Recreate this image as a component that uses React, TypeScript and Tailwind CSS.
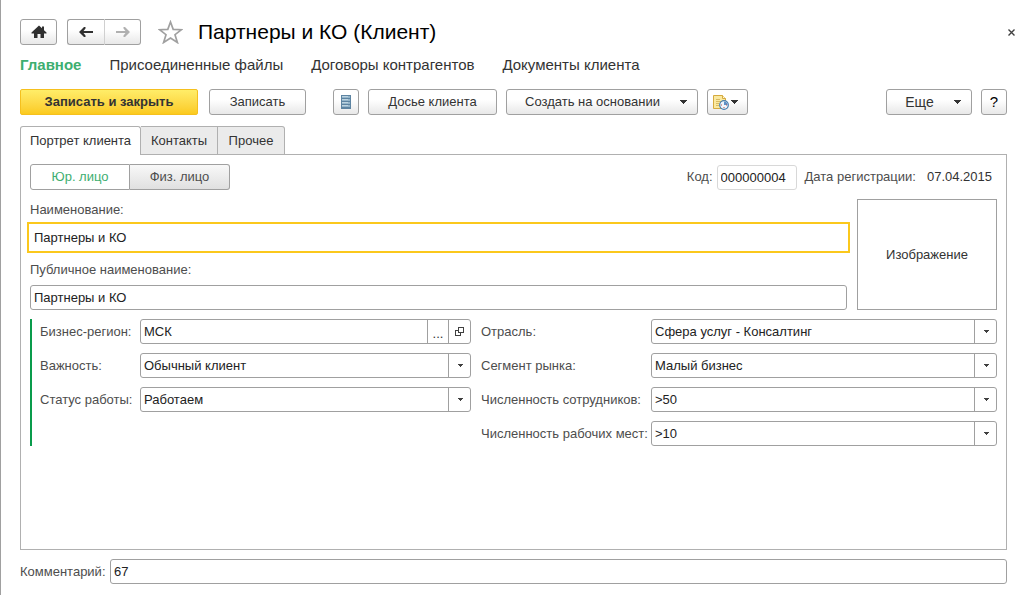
import type { ReactNode } from 'react';
import clsx from 'clsx';

const buttonBase =
  'flex h-[26px] shrink-0 items-center justify-center rounded-[3px] border border-[#a0a0a0] bg-linear-to-b from-white from-40% to-[#e8e8e8] text-[#333333]';

function Caret({ small = false }: { small?: boolean }) {
  return small ? (
    <svg width="5" height="3" viewBox="0 0 5 3" shapeRendering="crispEdges" aria-hidden="true">
      <path d="M0 0h5v1H4v1H3v1H2V2H1V1H0z" fill="#404040" />
    </svg>
  ) : (
    <svg width="7" height="4" viewBox="0 0 7 4" shapeRendering="crispEdges" aria-hidden="true">
      <path d="M0 0h7v1H6v1H5v1H4v1H3V3H2V2H1V1H0z" fill="#333333" />
    </svg>
  );
}

function ArrowIcon({ forward = false }: { forward?: boolean }) {
  return (
    <svg width="14" height="12" viewBox="0 0 14 12" aria-hidden="true">
      {forward ? (
        <path d="M14 6 9 1H7.500v1.500L9.500 5H0v2h9.500l-2 2.500V11H9z" fill="#b0b0b0" />
      ) : (
        <path d="M0 6 5 1h1.500v1.500L4.500 5H14v2H4.500l2 2.500V11H5z" fill="#303030" />
      )}
    </svg>
  );
}

function ListIcon() {
  return (
    <svg width="10" height="14" viewBox="0 0 10 14" shapeRendering="crispEdges" aria-hidden="true">
      <path d="M0 0h10v14H0z" fill="#5d84a2" />
      <path d="M1 1h8v2H1zM1 4h8v2H1zM1 7h8v2H1zM1 10h8v2H1z" fill="#94b5ca" />
      <path d="M1 1h6v1H1zM1 4h6v1H1zM1 7h6v1H1zM1 10h6v1H1z" fill="#bdd3e0" />
    </svg>
  );
}

function ReminderIcon() {
  return (
    <svg width="16" height="16" viewBox="0 0 16 16" aria-hidden="true">
      <path d="M.5 1.500h9l3 3v10H.5z" fill="#fae9a0" stroke="#d5aa3f" />
      <path d="M9.500 1.500v3h3" fill="#fff6ce" stroke="#d5aa3f" />
      <path d="M3 5.500h4M3 7.500h6M3 9.500h3M3 11.500h3" stroke="#d9bb62" />
      <circle cx="11" cy="11" r="4.300" fill="#eef5fb" stroke="#447cae" strokeWidth="1.200" />
      <path d="M11 11V7.500A3.500 3.500 0 0 1 14.500 11z" fill="#5d8fc4" />
      <path d="M8 11h1M11 13v1M13 11h1" stroke="#c05050" />
    </svg>
  );
}

function TextField({ id, value, className }: { id: string; value: string; className?: string }) {
  return (
    <input
      id={id}
      type="text"
      defaultValue={value}
      className={clsx(
        'h-[25px] min-w-0 border bg-white px-[3px] text-[#222222]',
        className ?? 'w-full rounded-[3px] border-[#a0a0a0] outline-none',
      )}
    />
  );
}

function SelectField({ id, value }: { id: string; value: string }) {
  return (
    <div className="relative min-w-0">
      <select
        id={id}
        defaultValue={value}
        className="block h-[25px] w-full appearance-none rounded-[3px] border border-[#a0a0a0] bg-white pr-6 pl-[3px] text-[#222222] outline-none"
      >
        <option>{value}</option>
      </select>
      <span className="pointer-events-none absolute inset-y-0 right-0 flex w-[23px] items-center justify-center border-l border-[#a0a0a0]">
        <Caret small />
      </span>
    </div>
  );
}

function FieldLabel({ htmlFor, children, className }: { htmlFor: string; children: ReactNode; className?: string }) {
  return (
    <label htmlFor={htmlFor} className={clsx('whitespace-nowrap text-[#4d4d4d]', className)}>
      {children}
    </label>
  );
}

const links = ['Присоединенные файлы', 'Договоры контрагентов', 'Документы клиента'];

export default function App() {
  return (
    <div className="flex min-h-screen flex-col border-l border-[#a0a0a0] bg-white pt-[19px] pr-[23px] pb-[11px] pl-[19px] font-['Liberation_Sans',Arial,sans-serif] text-[13px] leading-4 text-[#333333]">
      <header className="flex h-[26px] items-center">
        <button type="button" aria-label="Домой" className={clsx(buttonBase, 'w-[37px]')}>
          <svg width="16" height="14" viewBox="0 0 16 14" aria-hidden="true">
            <path d="M8 .5.500 7.500V8.500H3V13h3.500V9h3v4H13V8.500h2.500v-1L13 5.200V1.500h-2v1.800z" fill="#303030" />
          </svg>
        </button>
        <div className="ml-[10px] flex">
          <button
            type="button"
            aria-label="Назад"
            className={clsx(buttonBase, 'w-[38px] rounded-r-none border-r-[#d0d0d0]')}
          >
            <ArrowIcon />
          </button>
          <button type="button" aria-label="Вперед" className={clsx(buttonBase, 'w-9 rounded-l-none border-l-0')}>
            <ArrowIcon forward />
          </button>
        </div>
        <button type="button" aria-label="Добавить в избранное" className="ml-[17px]">
          <svg width="25" height="24" viewBox="0 0 25 24" aria-hidden="true">
            <path
              d="m12.500 2 2.700 7.400 8.200.3-6.400 5 2.400 7.800-6.900-4.500-6.900 4.500 2.400-7.800-6.400-5 8.200-.3z"
              fill="white"
              stroke="#a0a0a0"
              strokeWidth="1.700"
            />
          </svg>
        </button>
        <h1 className="ml-[15px] text-[21px] leading-6 text-black">Партнеры и КО (Клиент)</h1>
        <button type="button" aria-label="Закрыть" className="-mr-2 ml-auto">
          <svg width="7" height="7" viewBox="0 0 7 7" aria-hidden="true">
            <path d="m.5.5 6 6m0-6-6 6" stroke="#404040" strokeWidth="1.400" />
          </svg>
        </button>
      </header>

      <nav className="mt-[10px] flex gap-7 text-[15px] leading-5 whitespace-nowrap">
        <a href="#main" className="font-bold text-[#3dae70]">
          Главное
        </a>
        {links.map((link) => (
          <a key={link} href="#section">
            {link}
          </a>
        ))}
      </nav>

      <div className="mt-[14px] flex items-center">
        <button
          type="button"
          className="h-[26px] w-[178px] shrink-0 rounded-[2px] border border-[#f5c01e] bg-linear-to-b from-[#ffed68] to-[#fbca1c] font-bold"
        >
          Записать и закрыть
        </button>
        <button type="button" className={clsx(buttonBase, 'ml-[11px] w-[97px]')}>
          Записать
        </button>
        <button type="button" aria-label="Список" className={clsx(buttonBase, 'ml-[27px] w-[26px]')}>
          <ListIcon />
        </button>
        <button type="button" className={clsx(buttonBase, 'ml-[9px] w-[129px]')}>
          Досье клиента
        </button>
        <button type="button" className={clsx(buttonBase, 'ml-[9px] w-[192px] gap-5 pl-2')}>
          Создать на основании
          <Caret />
        </button>
        <button type="button" aria-label="Напоминания" className={clsx(buttonBase, 'ml-[9px] w-[41px] gap-0.5 pr-1')}>
          <ReminderIcon />
          <Caret />
        </button>
        <button type="button" className={clsx(buttonBase, 'ml-auto w-[86px] gap-5 pl-2 text-[14px]')}>
          Еще
          <Caret />
        </button>
        <button type="button" className={clsx(buttonBase, 'ml-[9px] w-[26px] text-[15px] text-black')}>
          ?
        </button>
      </div>

      <div role="tablist" className="relative mt-[11px] -mb-px flex">
        <button
          type="button"
          role="tab"
          aria-selected="true"
          className="h-[29px] w-[121px] rounded-t-[3px] border border-b-0 border-[#b0b0b0] bg-white"
        >
          Портрет клиента
        </button>
        <button
          type="button"
          role="tab"
          aria-selected="false"
          className="h-[29px] w-[77px] border border-l-0 border-[#b0b0b0] bg-[#ebebeb]"
        >
          Контакты
        </button>
        <button
          type="button"
          role="tab"
          aria-selected="false"
          className="h-[29px] w-[67px] rounded-tr-[3px] border border-l-0 border-[#b0b0b0] bg-[#ebebeb]"
        >
          Прочее
        </button>
      </div>

      <main role="tabpanel" className="grow border border-[#b0b0b0] px-[9px] pt-[9px] pb-4">
        <div className="flex items-center">
          <div className="flex">
            <button
              type="button"
              aria-pressed="true"
              className="h-[26px] w-[100px] rounded-l-[3px] border border-[#a0a0a0] bg-white text-[#3dae70]"
            >
              Юр. лицо
            </button>
            <button
              type="button"
              aria-pressed="false"
              className="h-[26px] w-[100px] rounded-r-[3px] border border-l-0 border-[#a0a0a0] bg-linear-to-b from-[#f8f8f8] to-[#e0e0e0] text-[#4d4d4d]"
            >
              Физ. лицо
            </button>
          </div>
          <FieldLabel htmlFor="code" className="ml-auto">
            Код:
          </FieldLabel>
          <TextField id="code" value="000000004" className="ml-1 w-20 rounded-[3px] border-[#d8d8d8] outline-none" />
          <span className="ml-2 text-[#4d4d4d]">Дата регистрации:</span>
          <span className="mr-[5px] ml-[11px]">07.04.2015</span>
        </div>

        <div className="mt-[9px] flex gap-[10px]">
          <div className="flex min-w-0 grow flex-col">
            <FieldLabel htmlFor="name" className="mt-[3px] mb-[7px]">
              Наименование:
            </FieldLabel>
            <TextField
              id="name"
              value="Партнеры и КО"
              className="w-full border-transparent outline-2 outline-offset-1 outline-[#fbc81c]"
            />
            <FieldLabel htmlFor="public-name" className="mt-3 mb-[7px]">
              Публичное наименование:
            </FieldLabel>
            <TextField id="public-name" value="Партнеры и КО" />
          </div>
          <div className="flex h-[111px] w-[140px] shrink-0 items-center justify-center border border-[#a0a0a0]">
            Изображение
          </div>
        </div>

        <div className="mt-[9px] grid grid-cols-[100px_minmax(0,331fr)_180px_minmax(0,346fr)] items-center gap-y-[9px] border-l-2 border-[#099b4b] pl-2">
          <FieldLabel htmlFor="region">Бизнес-регион:</FieldLabel>
          <div className="flex h-[25px] overflow-hidden rounded-[3px] border border-[#a0a0a0]">
            <input
              id="region"
              type="text"
              defaultValue="МСК"
              className="min-w-0 grow px-[3px] text-[#222222] outline-none"
            />
            <button type="button" aria-label="Выбрать" className="w-[21px] shrink-0 border-l border-[#a0a0a0] pt-1">
              ...
            </button>
            <button
              type="button"
              aria-label="Открыть"
              className="flex w-[22px] shrink-0 items-center justify-center border-l border-[#a0a0a0]"
            >
              <svg width="9" height="9" viewBox="0 0 9 9" shapeRendering="crispEdges" aria-hidden="true">
                <path d="M3.500.5h5v5h-5zM3 3.500H.5v5h5V6" fill="none" stroke="#404040" />
              </svg>
            </button>
          </div>
          <FieldLabel htmlFor="industry" className="pl-[10px]">
            Отрасль:
          </FieldLabel>
          <SelectField id="industry" value="Сфера услуг - Консалтинг" />

          <FieldLabel htmlFor="importance">Важность:</FieldLabel>
          <SelectField id="importance" value="Обычный клиент" />
          <FieldLabel htmlFor="segment" className="pl-[10px]">
            Сегмент рынка:
          </FieldLabel>
          <SelectField id="segment" value="Малый бизнес" />

          <FieldLabel htmlFor="status">Статус работы:</FieldLabel>
          <SelectField id="status" value="Работаем" />
          <FieldLabel htmlFor="employees" className="pl-[10px]">
            Численность сотрудников:
          </FieldLabel>
          <SelectField id="employees" value=">50" />

          <FieldLabel htmlFor="workplaces" className="col-start-3 pl-[10px]">
            Численность рабочих мест:
          </FieldLabel>
          <SelectField id="workplaces" value=">10" />
        </div>
      </main>

      <footer className="mt-[9px] flex items-center">
        <FieldLabel htmlFor="comment" className="w-[90px] shrink-0">
          Комментарий:
        </FieldLabel>
        <TextField id="comment" value="67" />
      </footer>
    </div>
  );
}
